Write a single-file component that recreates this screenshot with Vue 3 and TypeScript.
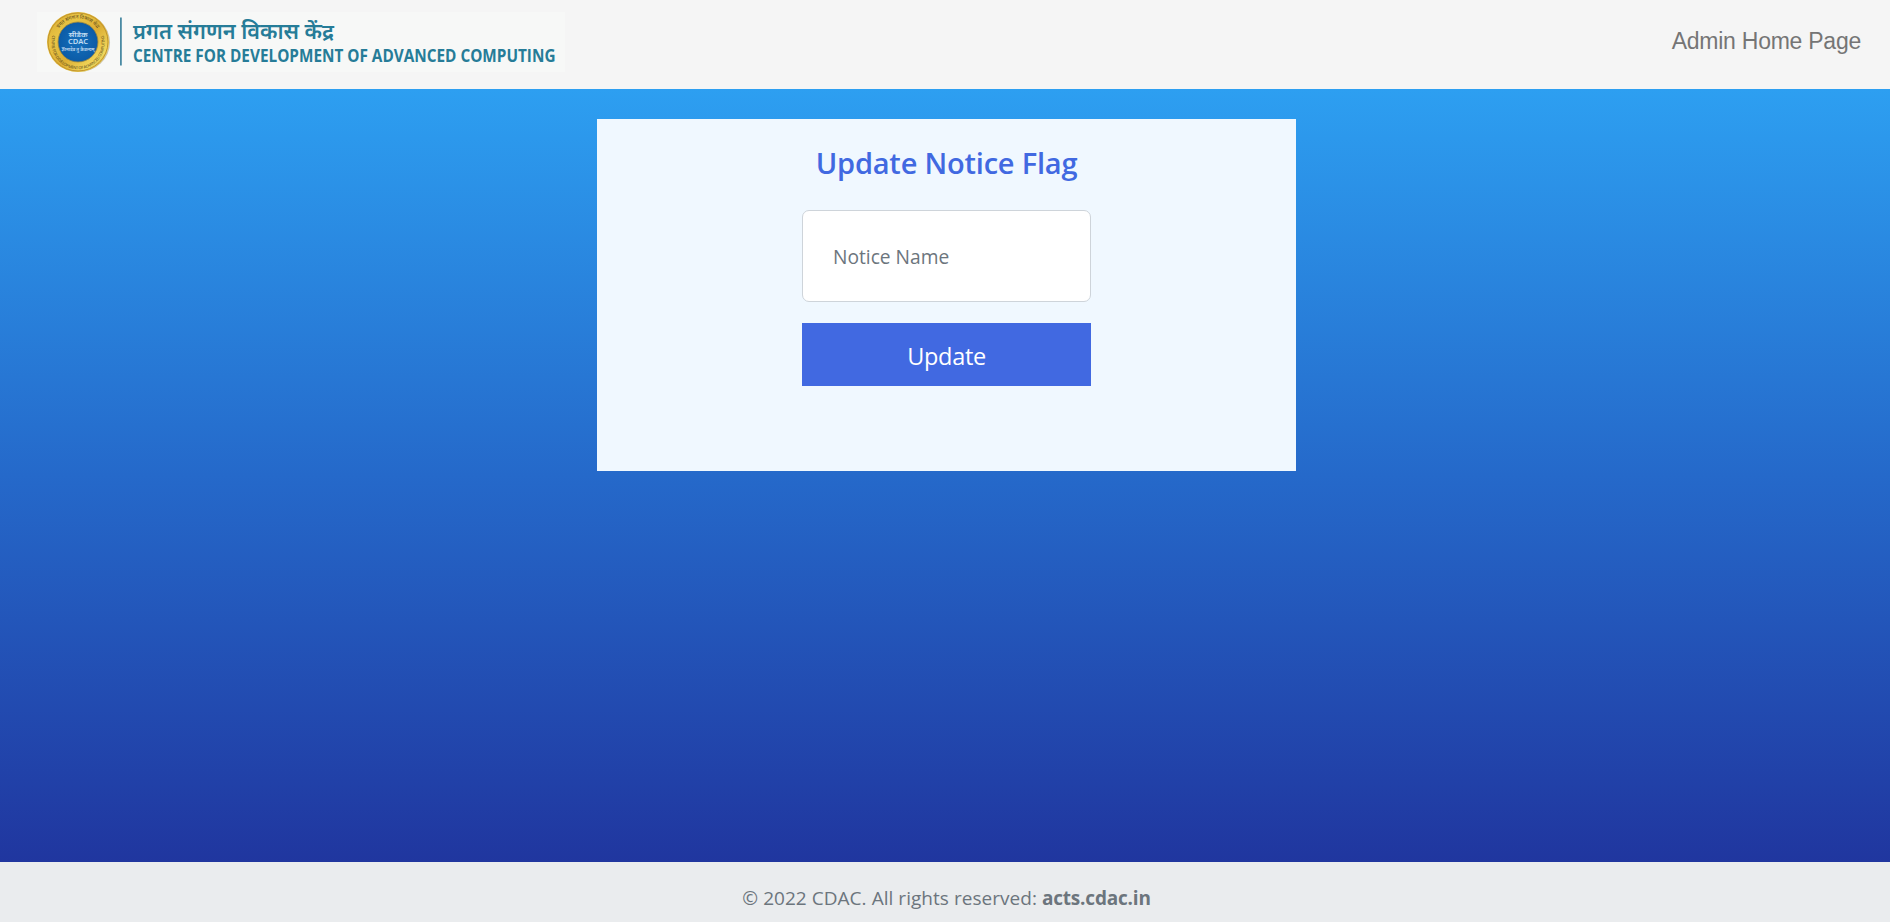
<script setup lang="ts">
import { ref } from 'vue'

const noticeName = ref<string>('')
const submit = (): void => {
  noticeName.value = noticeName.value.trim()
}
</script>

<template>
  <div class="page">
    <header class="navbar">
      <svg class="logo" width="528" height="60" viewBox="0 0 528 60">
        <defs>
          <linearGradient id="gold" x1="0" y1="0" x2="1" y2="1">
            <stop offset="0" stop-color="#d3a62c" />
            <stop offset="0.3" stop-color="#e9c545" />
            <stop offset="0.55" stop-color="#dcae34" />
            <stop offset="0.8" stop-color="#f1d85c" />
            <stop offset="1" stop-color="#b98a28" />
          </linearGradient>
          <radialGradient id="sea">
            <stop offset="0" stop-color="#1470bd" />
            <stop offset="1" stop-color="#0c5ba6" />
          </radialGradient>
          <path id="ringTop" d="M17.500 30 A23.500 23.500 0 0 1 64.500 30" />
          <path id="ringBottom" d="M16 22 A26.500 26.500 0 1 0 66 22" />
        </defs>
        <rect width="528" height="60" fill="#f7f8f7" />
        <ellipse cx="42" cy="30.500" rx="31" ry="29.500" fill="#c9c4b4" />
        <ellipse cx="41" cy="30" rx="31" ry="30" fill="url(#gold)" />
        <ellipse cx="41" cy="30" rx="30" ry="29" fill="none" stroke="#c2942c" stroke-width="1" />
        <circle cx="41" cy="30" r="20" fill="url(#sea)" stroke="#a58a3a" stroke-width="0.800" />
        <text class="ring" font-size="5"><textPath href="#ringTop" startOffset="50%" text-anchor="middle">प्रगत संगणन विकास केंद्र</textPath></text>
        <text class="ring" font-size="4"><textPath href="#ringBottom" startOffset="50%" text-anchor="middle" textLength="98">CENTRE FOR DEVELOPMENT OF ADVANCED COMPUTING</textPath></text>
        <text class="seal" x="41" y="24.800" font-size="6.500" textLength="19" lengthAdjust="spacingAndGlyphs">सीडैक</text>
        <text class="seal" x="41" y="32.300" font-size="6.500" textLength="20" lengthAdjust="spacingAndGlyphs">CDAC</text>
        <text class="seal" x="41" y="38.600" font-size="4.500" textLength="33" lengthAdjust="spacingAndGlyphs">ज्ञानादेव तु कैवल्यम्</text>
        <rect x="83" y="5.500" width="1.800" height="48" fill="#4a8aa3" />
        <text class="brand hindi" x="96" y="26.800" font-size="21.500" textLength="201" lengthAdjust="spacingAndGlyphs">प्रगत संगणन विकास केंद्र</text>
        <text class="brand" x="96" y="49.700" font-size="18.300" textLength="422.500" lengthAdjust="spacingAndGlyphs">CENTRE FOR DEVELOPMENT OF ADVANCED COMPUTING</text>
      </svg>
      <a class="home">Admin Home Page</a>
    </header>

    <main class="content">
      <form class="card" @submit.prevent="submit">
        <h1 class="title">Update Notice Flag</h1>
        <input v-model="noticeName" class="field" type="text" placeholder="Notice Name" />
        <button class="button" type="submit">Update</button>
      </form>
    </main>

    <footer class="footer">
      <span class="rights">© 2022 CDAC. All rights reserved:</span>
      <a class="site">acts.cdac.in</a>
    </footer>
  </div>
</template>

<style>
body {
  margin: 0;
}
</style>

<style scoped>
.page {
  display: flex;
  flex-direction: column;
  height: 922px;
  overflow: hidden;
  font-family: "Open Sans", "Noto Sans", sans-serif;
}
.navbar {
  display: flex;
  justify-content: space-between;
  box-sizing: border-box;
  height: 89px;
  padding: 12px 29px 0 37px;
  background: #f5f5f5;
}
.logo {
  overflow: visible;
}
.ring {
  fill: #5c4a1c;
  font-family: "Noto Sans", sans-serif;
}
.seal {
  fill: #c3def2;
  font-family: "Noto Sans", sans-serif;
  font-weight: 600;
  text-anchor: middle;
}
.brand {
  fill: #267c98;
  font-family: "Open Sans", "Noto Sans", sans-serif;
  font-weight: 700;
}
.hindi {
  font-weight: 600;
}
.home {
  padding-top: 15px;
  font: 23px/28px "Liberation Sans", Arial, sans-serif;
  letter-spacing: -0.25px;
  color: #757575;
}
.content {
  display: flex;
  justify-content: center;
  align-items: flex-start;
  box-sizing: border-box;
  height: 773px;
  padding: 30px 0 0 3px;
  background: linear-gradient(#2d9ff1, #2569ca 50%, #20369f);
}
.card {
  display: flex;
  flex-direction: column;
  align-items: center;
  box-sizing: border-box;
  width: 699px;
  height: 352px;
  padding-top: 25px;
  background: aliceblue;
}
.title {
  margin: 0 0 28px;
  font-size: 29px;
  font-weight: 600;
  line-height: 38px;
  letter-spacing: -0.2px;
  color: #4169e1;
}
.field {
  box-sizing: border-box;
  width: 289px;
  height: 92px;
  padding: 1px 31px 0 30px;
  border: 1px solid #ced4da;
  border-radius: 7px;
  font: 19.200px "Open Sans", "Noto Sans", sans-serif;
}
.field::placeholder {
  color: #6c757d;
  opacity: 1;
}
.button {
  width: 289px;
  height: 63px;
  margin-top: 21px;
  padding: 3px 0 0;
  border: 0;
  background: #4169e1;
  color: #fff;
  font: 23.500px "Open Sans", "Noto Sans", sans-serif;
  letter-spacing: -0.3px;
}
.footer {
  display: flex;
  justify-content: center;
  gap: 5px;
  height: 60px;
  padding-left: 3px;
  background: #eaecee;
  color: #6c757d;
  font-size: 19px;
  line-height: 72px;
}
.rights {
  letter-spacing: 0.04px;
}
.site {
  font-weight: 700;
  letter-spacing: -0.2px;
}
</style>
